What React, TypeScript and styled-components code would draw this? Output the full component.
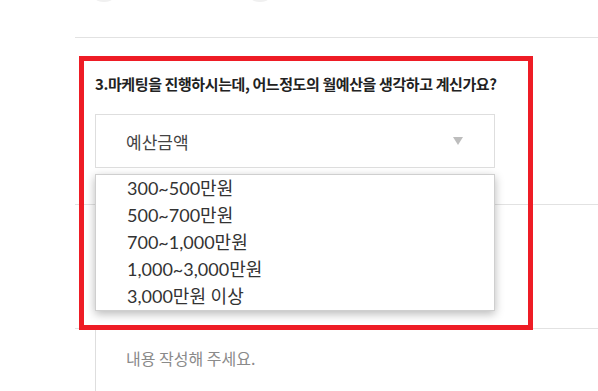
import React from 'react';
import styled, { createGlobalStyle } from 'styled-components';

const GlobalStyle = createGlobalStyle`
  html, body {
    margin: 0;
    padding: 0;
    background: #fff;
  }
  body {
    font-family: Lato, "Noto Sans CJK KR", sans-serif;
  }
`;

const Page = styled.div`
  position: relative;
  width: 598px;
  height: 391px;
  overflow: hidden;
  background: #fff;
`;

const Column = styled.div`
  margin-left: 75px;
  width: 700px;
`;

const TopBar = styled.div`
  height: 37px;
  display: flex;
  gap: 122px;
  padding-left: 12px;
  border-bottom: 1px solid #e2e2e2;
`;

const Bubble = styled.div`
  width: 34px;
  height: 34px;
  margin-top: -32px;
  border-radius: 50%;
  background: #f0f0f0;
`;

const Section = styled.section<{ height?: number }>`
  position: relative;
  padding: 36px 0 36px 20px;
  border-bottom: 1px solid #e2e2e2;
  ${p => (p.height ? `height: ${p.height}px; padding: 0; box-sizing: border-box;` : '')}
`;

const Question = styled.h3`
  margin: 0;
  font-family: "Noto Sans CJK KR", sans-serif;
  font-size: 15px;
  line-height: 20px;
  font-weight: 700;
  letter-spacing: -0.4px;
  color: #222;
`;

const SelectBox = styled.div`
  margin-top: 20px;
  width: 400px;
  height: 54px;
  box-sizing: border-box;
  border: 1px solid #dedede;
  display: flex;
  align-items: center;
  justify-content: space-between;
  padding: 0 31px 0 30px;
  font-size: 17px;
  color: #444;
`;

const Options = styled.ul`
  position: absolute;
  left: 20px;
  top: 136px;
  z-index: 2;
  margin: 0;
  padding: 0;
  list-style: none;
  width: 400px;
  box-sizing: border-box;
  background: #fff;
  border: 1px solid #cfcfcf;
  box-shadow: 0 3px 9px rgba(0, 0, 0, 0.28);
`;

const Option = styled.li`
  height: 27px;
  line-height: 27px;
  padding-left: 31px;
  font-size: 18px;
  color: #333;
`;

const TextArea = styled.div`
  margin-left: 20px;
  height: 80px;
  border-left: 1px solid #dedede;
  padding: 19px 0 0 30px;
  font-family: "Noto Sans CJK KR", sans-serif;
  font-size: 16px;
  line-height: 20px;
  color: #8a8a8a;
`;

const Highlight = styled.div`
  position: absolute;
  left: 79px;
  top: 56px;
  width: 454px;
  height: 274px;
  box-sizing: border-box;
  border: 5px solid #ee1c25;
  z-index: 3;
  pointer-events: none;
`;

const budgets = [
  '300~500만원',
  '500~700만원',
  '700~1,000만원',
  '1,000~3,000만원',
  '3,000만원 이상',
];

const Caret = () => (
  <svg width="10" height="8" viewBox="0 0 10 8">
    <polygon points="0,0 10,0 5,8" fill="#bdbdbd" />
  </svg>
);

const App: React.FC = () => (
  <Page>
    <GlobalStyle />
    <Column>
      <TopBar>
        <Bubble />
        <Bubble />
      </TopBar>
      <Section>
        <Question>3.마케팅을 진행하시는데, 어느정도의 월예산을 생각하고 계신가요?</Question>
        <SelectBox>
          <span>예산금액</span>
          <Caret />
        </SelectBox>
        <Options>
          {budgets.map(b => (
            <Option key={b}>{b}</Option>
          ))}
        </Options>
      </Section>
      <Section height={124} />
      <TextArea>내용 작성해 주세요.</TextArea>
    </Column>
    <Highlight />
  </Page>
);

export default App;
